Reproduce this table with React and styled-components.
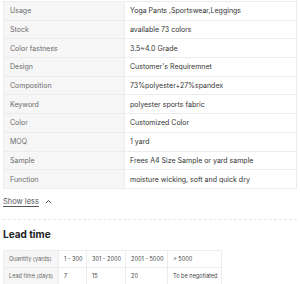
import React from "react";
import styled, { createGlobalStyle } from "styled-components";

const Global = createGlobalStyle`
  html, body { margin: 0; padding: 0; background: #fff; }
  body { font-family: Inter, "Noto Sans", Arial, sans-serif; }
`;

const Page = styled.div`
  padding: 1px 3px 0 3px;
  width: 294px;
`;

const SpecTable = styled.table`
  width: 294px;
  border-collapse: collapse;
  table-layout: fixed;
  border: 1px solid #ececec;
`;

const Row = styled.tr`
  height: 18.7px;
  border-bottom: 1px solid #ececec;
`;

const Key = styled.td`
  width: 114px;
  background: #f6f6f6;
  color: #6b6b6b;
  font-size: 7px;
  padding: 0 0 0 6px;
  border-right: 1px solid #ececec;
  white-space: nowrap;
`;

const Val = styled.td`
  color: #333;
  font-size: 7px;
  padding: 0 0 0 5px;
  white-space: nowrap;
`;

const ShowLess = styled.div`
  display: flex;
  align-items: center;
  gap: 6px;
  height: 25px;
  font-size: 7.5px;
  color: #555;
  span { text-decoration: underline; text-underline-offset: 1.5px; }
`;

const Divider = styled.div`
  border-top: 1px dashed #e6e6e6;
  margin-top: 5px;
`;

const Title = styled.div`
  font-size: 10px;
  font-weight: 700;
  color: #222;
  margin-top: 8px;
  height: 22px;
  line-height: 12px;
`;

const LeadTable = styled.table`
  border-collapse: collapse;
  table-layout: fixed;
  width: 218px;
`;

const LRow = styled.tr`
  height: 17px;
`;

const LCell = styled.td`
  box-sizing: border-box;
  border: 1px solid #ececec;
  font-size: 5.6px;
  color: ${p => (p.$head ? "#6b6b6b" : "#444")};
  background: ${p => (p.$head ? "#f6f6f6" : "#fff")};
  padding: 0 0 0 5px;
  white-space: nowrap;
  overflow: hidden;
`;

const specs = [
  ["Usage", "Yoga Pants ,Sportswear,Leggings"],
  ["Stock", "available 73 colors"],
  ["Color fastness", "3.5~4.0 Grade"],
  ["Design", "Customer's Requiremnet"],
  ["Composition", "73%polyester+27%spandex"],
  ["Keyword", "polyester sports fabric"],
  ["Color", "Customized Color"],
  ["MOQ", "1 yard"],
  ["Sample", "Frees A4 Size Sample or yard sample"],
  ["Function", "moisture wicking, soft and quick dry"],
];

const widths = [55, 28, 39, 42, 54];
const lead = [
  ["Quantity (yards)", "1 - 300", "301 - 2000", "2001 - 5000", "> 5000"],
  ["Lead time (days)", "7", "15", "20", "To be negotiated"],
];

export default function App() {
  return (
    <>
      <Global />
      <Page>
        <SpecTable>
          <tbody>
            {specs.map(([k, v]) => (
              <Row key={k}>
                <Key>{k}</Key>
                <Val>{v}</Val>
              </Row>
            ))}
          </tbody>
        </SpecTable>
        <ShowLess>
          <span>Show less</span>
          <svg width="7" height="5" viewBox="0 0 7 5" fill="none">
            <path d="M1 4 L3.5 1.5 L6 4" stroke="#555" strokeWidth="1" />
          </svg>
        </ShowLess>
        <Divider />
        <Title>Lead time</Title>
        <LeadTable>
          <colgroup>
            {widths.map((w, i) => (
              <col key={i} style={{ width: w }} />
            ))}
          </colgroup>
          <tbody>
            {lead.map((r, i) => (
              <LRow key={i}>
                {r.map((c, j) => (
                  <LCell key={j} $head={j === 0}>
                    {c}
                  </LCell>
                ))}
              </LRow>
            ))}
          </tbody>
        </LeadTable>
      </Page>
    </>
  );
}
